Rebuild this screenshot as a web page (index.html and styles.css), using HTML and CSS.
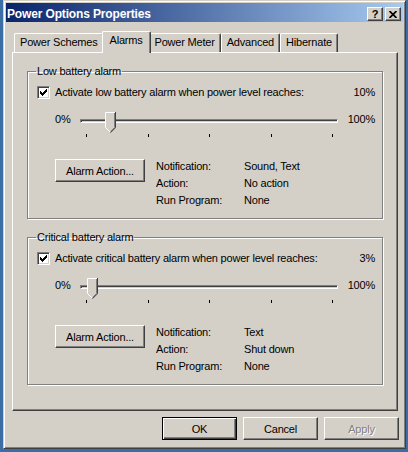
FILE: index.html
```html
<!DOCTYPE html>
<html lang="en">
<head>
    <meta charset="UTF-8">
    <title>Power Options Properties</title>
    <link rel="stylesheet" href="styles.css">
</head>
<body>
    <div class="window">
        <div class="titlebar">
            <span class="title">Power Options Properties</span>
            <div class="caption-btns">
                <span class="caption-btn">?</span>
                <span class="caption-btn">
                    <svg width="8" height="7" viewBox="0 0 8 7"><path d="M0.5 0 L7.5 7 M7.5 0 L0.5 7" stroke="#000" stroke-width="1.7" fill="none"/></svg>
                </span>
            </div>
        </div>

        <div class="tabs">
            <div class="tab">Power Schemes</div>
            <div class="tab active">Alarms</div>
            <div class="tab">Power Meter</div>
            <div class="tab">Advanced</div>
            <div class="tab">Hibernate</div>
        </div>

        <div class="panel">
            <fieldset class="group">
                <legend>Low battery alarm</legend>
                <div class="check-row">
                    <span class="checkbox">
                        <svg width="9" height="9" viewBox="0 0 9 9" shape-rendering="crispEdges"><path d="M1 3 H2 V4 H3 V5 H4 V4 H5 V3 H6 V2 H7 V1 H8 V4 H7 V5 H6 V6 H5 V7 H4 V8 H3 V7 H2 V6 H1 Z" fill="#000"/></svg>
                    </span>
                    <span class="check-label">Activate low battery alarm when power level reaches:</span>
                    <span class="level">10%</span>
                </div>
                <div class="slider-row">
                    <span class="slider-min">0%</span>
                    <div class="slider">
                        <div class="slider-track"></div>
                        <svg class="slider-thumb" style="left: 25px" width="11" height="21" viewBox="0 0 11 21">
                            <path d="M0 0 H11 V16 L5.5 21 L0 16 Z" fill="#d4d0c8"/>
                            <path d="M0.5 15.5 V0.5 H10" stroke="#fff" fill="none"/>
                            <path d="M0.5 15.5 L5 20" stroke="#fff" fill="none"/>
                            <path d="M9.5 1 V15.5 L5.5 19.5" stroke="#808080" fill="none"/>
                            <path d="M10.5 0 V15.7 L5.5 20.7" stroke="#404040" fill="none"/>
                        </svg>
                        <div class="slider-ticks">
                            <span class="tick"></span><span class="tick"></span><span class="tick"></span><span class="tick"></span><span class="tick"></span>
                        </div>
                    </div>
                    <span class="slider-max">100%</span>
                </div>
                <div class="action-row">
                    <button class="btn btn-action">Alarm Action...</button>
                    <div class="info">
                        <span>Notification:</span><span>Sound, Text</span>
                        <span>Action:</span><span>No action</span>
                        <span>Run Program:</span><span>None</span>
                    </div>
                </div>
            </fieldset>

            <fieldset class="group">
                <legend>Critical battery alarm</legend>
                <div class="check-row">
                    <span class="checkbox">
                        <svg width="9" height="9" viewBox="0 0 9 9" shape-rendering="crispEdges"><path d="M1 3 H2 V4 H3 V5 H4 V4 H5 V3 H6 V2 H7 V1 H8 V4 H7 V5 H6 V6 H5 V7 H4 V8 H3 V7 H2 V6 H1 Z" fill="#000"/></svg>
                    </span>
                    <span class="check-label">Activate critical battery alarm when power level reaches:</span>
                    <span class="level">3%</span>
                </div>
                <div class="slider-row">
                    <span class="slider-min">0%</span>
                    <div class="slider">
                        <div class="slider-track"></div>
                        <svg class="slider-thumb" style="left: 7px" width="11" height="21" viewBox="0 0 11 21">
                            <path d="M0 0 H11 V16 L5.5 21 L0 16 Z" fill="#d4d0c8"/>
                            <path d="M0.5 15.5 V0.5 H10" stroke="#fff" fill="none"/>
                            <path d="M0.5 15.5 L5 20" stroke="#fff" fill="none"/>
                            <path d="M9.5 1 V15.5 L5.5 19.5" stroke="#808080" fill="none"/>
                            <path d="M10.5 0 V15.7 L5.5 20.7" stroke="#404040" fill="none"/>
                        </svg>
                        <div class="slider-ticks">
                            <span class="tick"></span><span class="tick"></span><span class="tick"></span><span class="tick"></span><span class="tick"></span>
                        </div>
                    </div>
                    <span class="slider-max">100%</span>
                </div>
                <div class="action-row">
                    <button class="btn btn-action">Alarm Action...</button>
                    <div class="info">
                        <span>Notification:</span><span>Text</span>
                        <span>Action:</span><span>Shut down</span>
                        <span>Run Program:</span><span>None</span>
                    </div>
                </div>
            </fieldset>
        </div>

        <div class="buttons">
            <button class="btn btn-wide btn-default">OK</button>
            <button class="btn btn-wide">Cancel</button>
            <button class="btn btn-wide" disabled>Apply</button>
        </div>
    </div>
</body>
</html>
```

FILE: styles.css
```css
body {
    margin: 0;
    background-color: #3a6ea5;
    font-family: 'Liberation Sans', Arial, sans-serif;
    font-size: 11px;
    letter-spacing: -0.2px;
    color: #000;
}
.window {
    box-sizing: border-box;
    width: 403px;
    height: 449px;
    margin-left: 3px;
    padding: 2px;
    background-color: #d4d0c8;
    border: 1px solid;
    border-color: #d4d0c8 #404040 #404040 #d4d0c8;
    box-shadow: inset 1px 1px 0 #fff, inset -1px -1px 0 #808080;
}
.titlebar {
    display: flex;
    height: 19px;
    background: linear-gradient(to right, #0a246a, #a6caf0);
}
.title {
    flex: 1;
    padding: 3px 0 0 1px;
    color: #fff;
    font-weight: bold;
    font-size: 12px;
    line-height: 16px;
    letter-spacing: -0.15px;
}
.caption-btns {
    display: flex;
    gap: 2px;
    margin: 4px 2px 0 0;
}
.caption-btn {
    box-sizing: border-box;
    display: flex;
    align-items: center;
    justify-content: center;
    width: 16px;
    height: 14px;
    background-color: #d4d0c8;
    border: 1px solid;
    border-color: #fff #404040 #404040 #fff;
    box-shadow: inset -1px -1px 0 #808080;
    font-weight: bold;
    font-size: 11px;
    line-height: 12px;
}
.tabs {
    display: flex;
    align-items: flex-end;
    padding: 9px 0 0 8px;
}
.tab {
    box-sizing: border-box;
    height: 19px;
    padding: 0 5px;
    line-height: 17px;
    border: 1px solid;
    border-color: #fff #404040 transparent #fff;
    border-bottom: none;
    border-radius: 2px 2px 0 0;
    box-shadow: inset -1px 0 0 #808080;
    background-color: #d4d0c8;
}
.tab.active {
    position: relative;
    z-index: 1;
    height: 22px;
    margin: 0 -2px -1px;
    padding: 0 7px;
}
.panel {
    box-sizing: border-box;
    height: 359px;
    margin: 0 5px 0 6px;
    padding: 12px 14px 0 14px;
    border: 1px solid;
    border-color: #fff #404040 #404040 #fff;
    box-shadow: inset -1px -1px 0 #808080;
}
.group {
    margin: 0;
    padding: 8px 7px 9px 9px;
    border: 1px solid #808080;
    box-shadow: 1px 1px 0 #fff, inset 1px 1px 0 #fff;
}
.group + .group {
    margin-top: 12px;
}
.group legend {
    margin-left: -1px;
    padding: 0 1px;
    line-height: 13px;
}
.check-row {
    display: flex;
    align-items: center;
    height: 13px;
    line-height: 13px;
}
.checkbox {
    box-sizing: border-box;
    width: 13px;
    height: 13px;
    padding: 1px;
    margin-right: 5px;
    background-color: #fff;
    border: 1px solid;
    border-color: #808080 #fff #fff #808080;
    box-shadow: inset 1px 1px 0 #404040, inset -1px -1px 0 #d4d0c8;
}
.checkbox svg {
    display: block;
}
.check-label {
    flex: 1;
}
.slider-row {
    display: flex;
    margin: 13px 0 0 18px;
    line-height: 13px;
}
.slider-min {
    width: 25px;
    margin-top: 1px;
}
.slider-max {
    flex: 1;
    margin-top: 1px;
    text-align: right;
}
.slider {
    position: relative;
    width: 258px;
    height: 26px;
}
.slider-track {
    box-sizing: border-box;
    height: 4px;
    margin-top: 7px;
    border: 1px solid;
    border-color: #808080 #fff #fff #808080;
    box-shadow: inset 1px 1px 0 #404040;
}
.slider-thumb {
    position: absolute;
    top: 0;
}
.slider-ticks {
    display: flex;
    justify-content: space-between;
    margin-top: 11px;
    padding: 0 5px 0 6px;
}
.tick {
    width: 1px;
    height: 3px;
    background-color: #000;
}
.action-row {
    display: flex;
    align-items: flex-start;
    margin: 21px 0 0 18px;
}
.info {
    display: grid;
    grid-template-columns: 88px auto;
    margin: -1px 0 0 11px;
    line-height: 17px;
}
.btn {
    box-sizing: border-box;
    height: 23px;
    padding: 0;
    font: inherit;
    letter-spacing: inherit;
    color: #000;
    background-color: #d4d0c8;
    border: 1px solid;
    border-color: #fff #404040 #404040 #fff;
    box-shadow: inset -1px -1px 0 #808080;
}
.btn-action {
    width: 90px;
}
.btn-wide {
    width: 75px;
}
.btn-default {
    border: 1px solid #000;
    box-shadow: inset 1px 1px 0 #fff, inset -1px -1px 0 #404040, inset -2px -2px 0 #808080;
}
.btn:disabled {
    color: #808080;
    text-shadow: 1px 1px 0 #fff;
}
.buttons {
    display: flex;
    justify-content: flex-end;
    gap: 6px;
    margin-top: 6px;
    padding-right: 4px;
}
```
